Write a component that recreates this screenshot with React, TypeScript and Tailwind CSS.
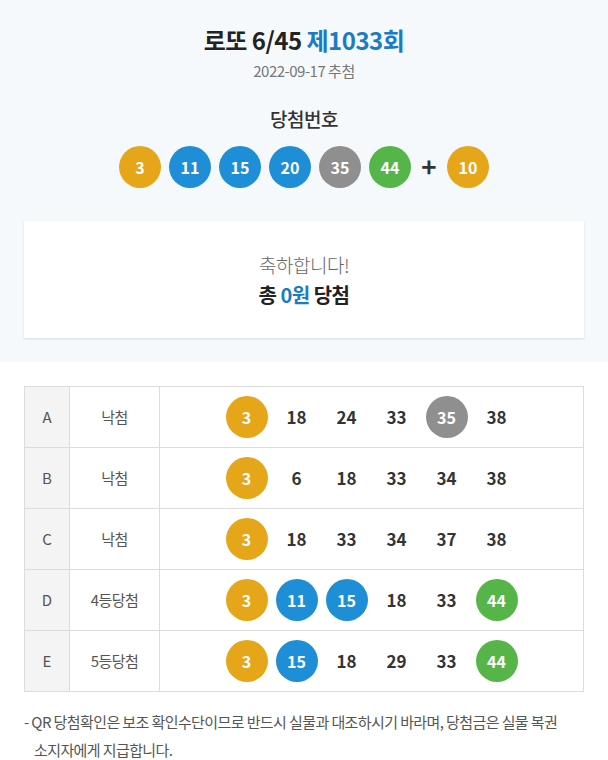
import React from "react";

type BallColor = "y" | "b" | "g" | "k" | null;

const colorClass: Record<string, string> = {
  y: "bg-[#e5a619]",
  b: "bg-[#1e8ed6]",
  k: "bg-[#8f8f8f]",
  g: "bg-[#56b548]",
};

function Ball({ n, c }: { n: number; c: BallColor }) {
  if (!c) {
    return (
      <div className="w-[42px] h-[42px] flex items-center justify-center text-[17px] font-bold text-[#333]">
        {n}
      </div>
    );
  }
  return (
    <div
      className={`w-[42px] h-[42px] rounded-full flex items-center justify-center text-[16px] font-bold text-white ${colorClass[c]}`}
    >
      {n}
    </div>
  );
}

const rows: { label: string; result: string; nums: [number, BallColor][] }[] = [
  { label: "A", result: "낙첨", nums: [[3, "y"], [18, null], [24, null], [33, null], [35, "k"], [38, null]] },
  { label: "B", result: "낙첨", nums: [[3, "y"], [6, null], [18, null], [33, null], [34, null], [38, null]] },
  { label: "C", result: "낙첨", nums: [[3, "y"], [18, null], [33, null], [34, null], [37, null], [38, null]] },
  { label: "D", result: "4등당첨", nums: [[3, "y"], [11, "b"], [15, "b"], [18, null], [33, null], [44, "g"]] },
  { label: "E", result: "5등당첨", nums: [[3, "y"], [15, "b"], [18, null], [29, null], [33, null], [44, "g"]] },
];

export default function App() {
  return (
    <div
      className="w-[608px] min-h-[760px] bg-white text-[#333]"
      style={{ fontFamily: '"Noto Sans CJK KR", "Noto Sans", sans-serif' }}
    >
      <div className="bg-[#f6f9fc] pt-6 pb-6 px-6 flex flex-col items-center">
        <h1 className="text-[24px] leading-8 font-bold text-[#222] tracking-[-0.5px]">
          로또 6/45 <span className="text-[#1b7cc1]">제1033회</span>
        </h1>
        <div className="mt-1 text-[15px] leading-[22px] text-[#777] tracking-[-0.5px]">2022-09-17 추첨</div>
        <div className="mt-6 text-[19px] leading-[26px] font-medium text-[#333] tracking-[-0.5px]">당첨번호</div>
        <div className="mt-[14px] flex items-center gap-[8px]">
          <Ball n={3} c="y" />
          <Ball n={11} c="b" />
          <Ball n={15} c="b" />
          <Ball n={20} c="b" />
          <Ball n={35} c="k" />
          <Ball n={44} c="g" />
          <div className="w-[20px] text-center text-[26px] leading-none font-bold text-[#333] -mt-[3px]">+</div>
          <Ball n={10} c="y" />
        </div>
        <div className="mt-[33px] w-full h-[117px] bg-white shadow-[0_1px_2px_rgba(0,0,0,0.12)] flex flex-col items-center justify-center">
          <div className="text-[19px] leading-[30px] text-[#666] font-light tracking-[-0.5px]">축하합니다!</div>
          <div className="text-[20px] leading-[30px] font-bold text-[#222] tracking-[-0.5px]">
            총 <span className="text-[#1b7cc1]">0원</span> 당첨
          </div>
        </div>
      </div>

      <div className="px-6 pt-6">
        <table className="w-full border-collapse border border-[#dcdcdc]">
          <tbody>
            {rows.map((r) => (
              <tr key={r.label} className="h-[61px]">
                <td className="w-[45px] border border-[#dcdcdc] bg-[#f4f4f4] text-center text-[15px] text-[#555]">
                  {r.label}
                </td>
                <td className="w-[90px] border border-[#dcdcdc] text-center text-[15px] text-[#555] tracking-[-0.5px]">
                  {r.result}
                </td>
                <td className="border border-[#dcdcdc]">
                  <div className="flex items-center justify-center gap-[8px]">
                    {r.nums.map(([n, c], i) => (
                      <Ball key={i} n={n} c={c} />
                    ))}
                  </div>
                </td>
              </tr>
            ))}
          </tbody>
        </table>
        <div className="mt-4 text-[15px] leading-[28px] text-[#555] tracking-[-0.6px] pl-[10px] -indent-[10px] break-keep">
          - QR 당첨확인은 보조 확인수단이므로 반드시 실물과 대조하시기 바라며, 당첨금은 실물 복권 소지자에게 지급합니다.
        </div>
      </div>
    </div>
  );
}
